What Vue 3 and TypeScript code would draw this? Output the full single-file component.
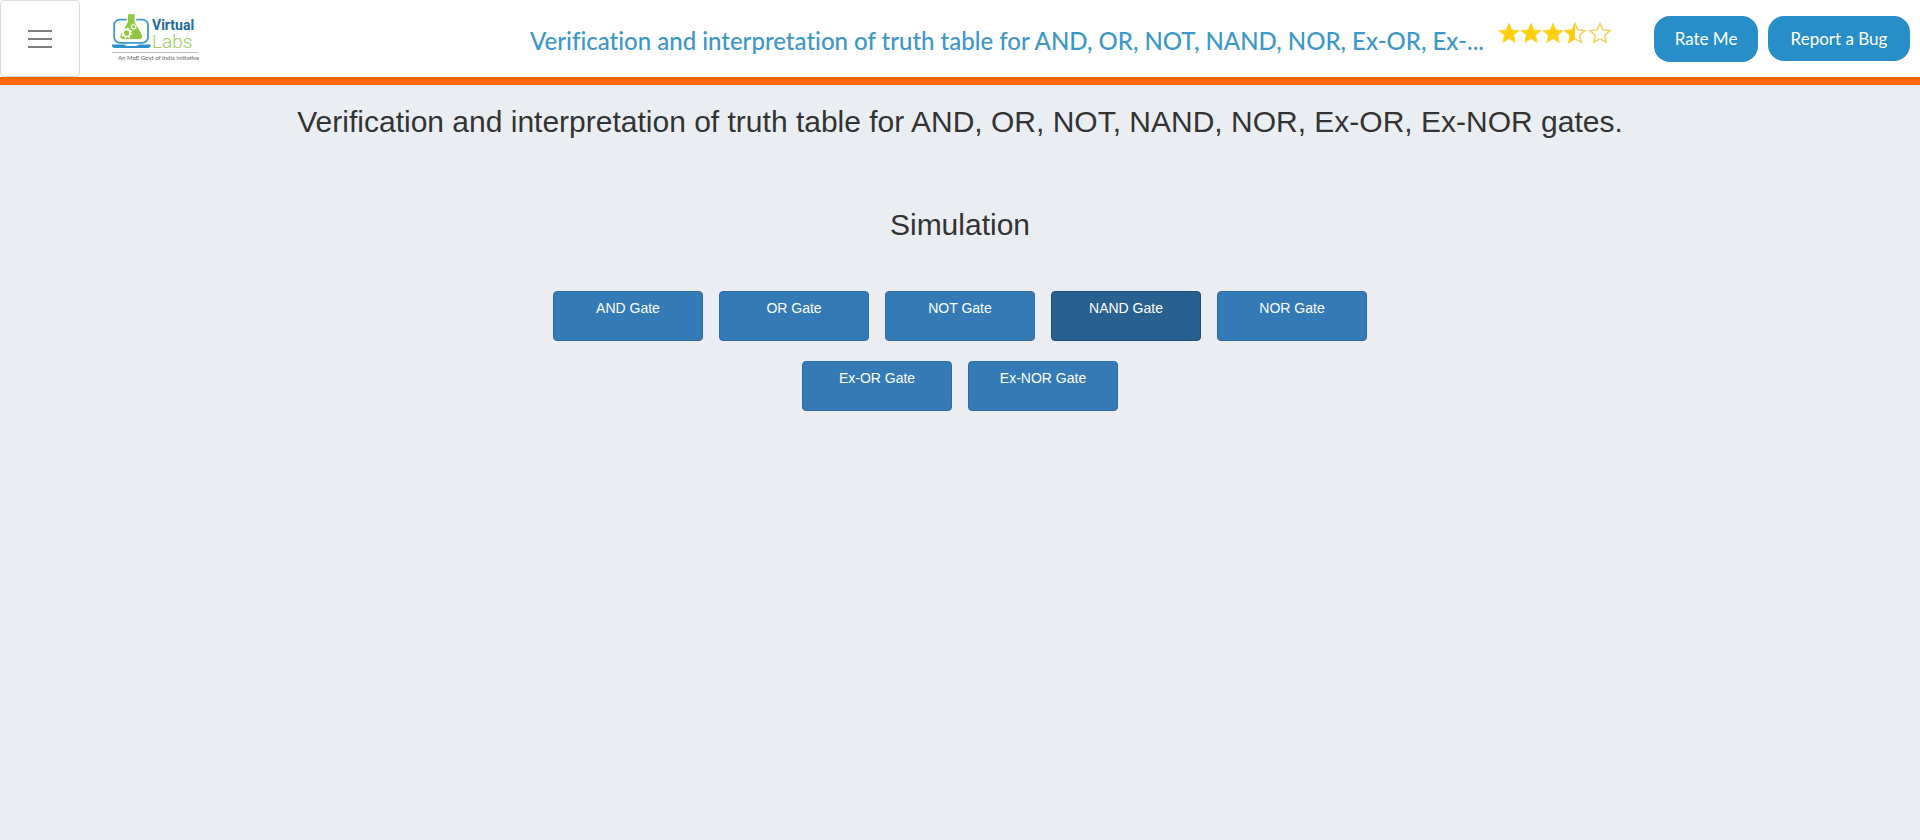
<script setup lang="ts">
import { ref } from 'vue'

const gates: string[] = ['AND', 'OR', 'NOT', 'NAND', 'NOR', 'Ex-OR', 'Ex-NOR']
const activeGate = ref<string>('NAND')

const stars: string[] = ['full', 'full', 'full', 'half', 'empty']
const starPath = 'M12 1.5 L15.1 8.7 L23 9.4 L17 14.6 L18.8 22.3 L12 18.2 L5.2 22.3 L7 14.6 L1 9.4 L8.9 8.7 Z'
</script>

<template>
  <div class="page">
    <header class="topbar">
      <button class="menu" type="button" aria-label="Open menu">
        <span class="bar"></span>
        <span class="bar"></span>
        <span class="bar"></span>
      </button>

      <a class="logo" href="#" aria-label="Virtual Labs">
        <svg width="88" height="50" viewBox="0 0 88 50">
          <rect x="2.2" y="6.6" width="33.8" height="23.2" rx="5.5" fill="#fff" stroke="#3d9bd0" stroke-width="1.8" />
          <path d="M14.6 4.5 H24.2 V8.5 H14.6 Z" fill="#fff" />
          <path d="M16 1.2 H22.6 V9 L29.8 21.5 Q31.4 25.4 27.6 25.9 H11 Q7.2 25.4 8.8 21.5 L16 9 Z" fill="#8fc73e" />
          <circle cx="14.6" cy="20" r="3.5" fill="none" stroke="#fff" stroke-width="1.7" />
          <circle cx="14.6" cy="20" r="4.8" fill="none" stroke="#fff" stroke-width="1.4" stroke-dasharray="1.9 1.87" />
          <circle cx="21.6" cy="13.8" r="2" fill="none" stroke="#fff" stroke-width="1.1" />
          <circle cx="21.6" cy="13.8" r="2.9" fill="none" stroke="#fff" stroke-width="0.8" stroke-dasharray="1.1 1.18" />
          <path d="M0 31.6 H12.5 Q13.5 33 15.5 33 H24 Q26 33 27 31.6 H38.7 V32.6 Q38.7 35 35.7 35 H3 Q0 35 0 32.6 Z" fill="#2f8fcd" />
          <text class="logo-virtual" x="40" y="17">Virtual</text>
          <text class="logo-labs" x="40" y="35">Labs</text>
          <path d="M0 39.5 H86" stroke="#b9b9b9" stroke-width="1" />
          <text class="logo-tag" x="6" y="47">An MoE Govt of India Initiative</text>
        </svg>
      </a>

      <h1 class="lab-title">Verification and interpretation of truth table for AND, OR, NOT, NAND, NOR, Ex-OR, Ex-...</h1>

      <div class="rating" role="img" aria-label="Rated 3.5 out of 5">
        <svg v-for="(kind, i) in stars" :key="i" :class="{ spaced: kind === 'empty' }" width="22" height="22" viewBox="0 0 24 24">
          <defs>
            <clipPath :id="'half-' + i"><rect x="0" y="0" width="12" height="24" /></clipPath>
          </defs>
          <path :d="starPath" :class="kind === 'full' ? 'star-full' : 'star-outline'" />
          <path v-if="kind === 'half'" :d="starPath" class="star-full" :clip-path="'url(#half-' + i + ')'" />
        </svg>
      </div>

      <div class="actions">
        <button class="pill rate" type="button">Rate Me</button>
        <button class="pill report" type="button">Report a Bug</button>
      </div>
    </header>

    <main class="content">
      <h2 class="heading">Verification and interpretation of truth table for AND, OR, NOT, NAND, NOR, Ex-OR, Ex-NOR gates.</h2>
      <h2 class="heading section">Simulation</h2>
      <div class="gates">
        <button
          v-for="gate in gates"
          :key="gate"
          type="button"
          class="gate"
          :class="{ active: gate === activeGate }"
          @click="activeGate = gate"
        >{{ gate }} Gate</button>
      </div>
    </main>
  </div>
</template>

<style>
body {
  background: #eaeef3;
}
</style>

<style scoped>
.page {
  min-height: 100vh;
  background: #eaeef3;
  font-family: "Liberation Sans", Arial, sans-serif;
  color: #333;
}

.topbar {
  display: flex;
  align-items: flex-start;
  background: #fff;
  border-bottom: 8px solid #ff6600;
}

.menu {
  display: flex;
  flex: none;
  flex-direction: column;
  align-items: center;
  justify-content: center;
  gap: 6px;
  box-sizing: border-box;
  width: 80px;
  height: 77px;
  padding: 0;
  border: 1px solid #ddd;
  border-radius: 4px;
  background: #fff;
  cursor: pointer;
}

.bar {
  width: 24px;
  height: 2px;
  background: #808080;
}

.logo {
  flex: none;
  margin: 13px 0 0 32px;
}

.logo svg {
  display: block;
}

.logo-virtual {
  font: 700 14px Roboto, sans-serif;
  fill: #22699c;
}

.logo-labs {
  font: 300 19px Roboto, sans-serif;
  fill: #a4cc5c;
}

.logo-tag {
  font: 6px Lato, sans-serif;
  fill: #666;
}

.lab-title {
  min-width: 0;
  margin: 25px 14px 0 auto;
  overflow: hidden;
  white-space: nowrap;
  font: 500 24px/32px Lato, sans-serif;
  font-variant-ligatures: none;
  color: #3c97c8;
}

.rating {
  display: flex;
  flex: none;
  width: 156px;
  margin-top: 22px;
}

.spaced {
  margin-left: 3px;
}

.star-full {
  fill: #ffcf0a;
  stroke: #ffd633;
  stroke-width: 1;
}

.star-outline {
  fill: #fff;
  stroke: #f7cf45;
  stroke-width: 1.5;
}

.actions {
  display: flex;
  flex: none;
  align-items: flex-start;
  gap: 10px;
  margin: 16px 10px 0 0;
}

.pill {
  height: 45px;
  padding: 0 16px;
  border: 0;
  border-radius: 16px;
  background: #288ec8;
  font: 17px/24px Lato, sans-serif;
  color: #fff;
  cursor: pointer;
}

.rate {
  min-width: 104px;
  height: 46px;
}

.report {
  min-width: 142px;
}

.content {
  display: flex;
  flex-direction: column;
  align-items: center;
  padding: 20px 16px;
}

.heading {
  margin: 0;
  font-size: 30px;
  font-weight: 400;
  line-height: 33px;
  text-align: center;
}

.section {
  margin-top: 70px;
}

.gates {
  display: flex;
  flex-wrap: wrap;
  justify-content: center;
  gap: 20px 16px;
  max-width: 900px;
  margin-top: 50px;
}

.gate {
  display: flex;
  justify-content: center;
  align-items: flex-start;
  box-sizing: border-box;
  width: 150px;
  height: 50px;
  padding: 6px 12px;
  border: 1px solid #2e6da4;
  border-radius: 4px;
  background: #337ab7;
  font: 14px/20px "Liberation Sans", Arial, sans-serif;
  color: #fff;
  cursor: pointer;
}

.gate.active {
  border-color: #204d74;
  background: #286090;
}
</style>
